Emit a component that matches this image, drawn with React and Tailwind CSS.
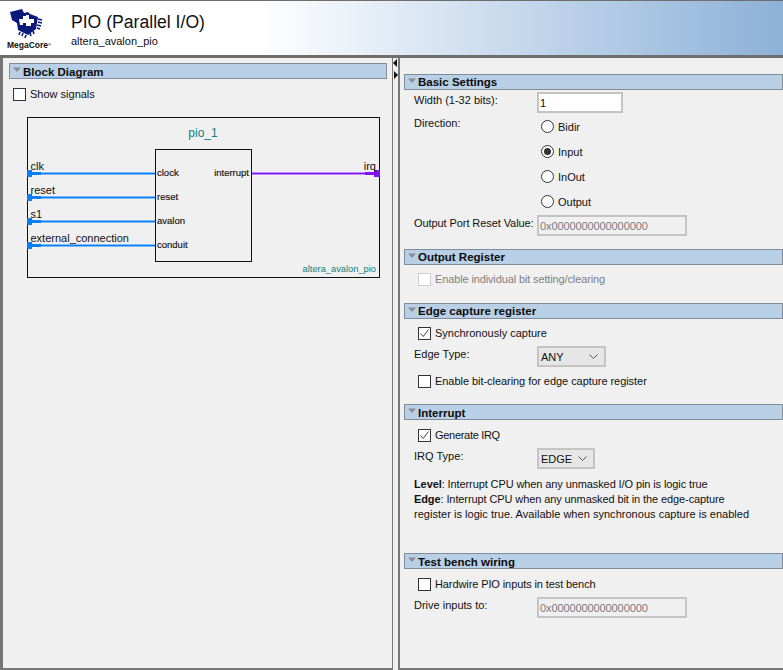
import React from 'react';

const SectionTitle = ({ title, low }) => (
  <div className="flex h-[16px] items-center border border-[#808c99] bg-[#b8cfe5] pl-[2px]">
    <svg width="10" height="6" viewBox="0 0 10 6" className="mb-[3px] shrink-0">
      <path d="M1 0.5h8L5 5z" fill="#8a8f96" />
    </svg>
    <span className={`ml-[1px] text-[11.5px] font-bold leading-[14px] text-[#0c0c0c] ${low ? 'pt-[1px]' : ''}`}>{title}</span>
  </div>
);

const CheckBox = ({ label, checked, disabled, tight }) => (
  <div className="flex h-[14px] items-center pl-[14px]">
    <span className={`flex h-[13px] w-[13px] items-center justify-center border bg-white ${disabled ? 'border-[#cfcfcf]' : 'border-[#333]'}`}>
      {checked && (
        <svg width="11" height="11" viewBox="0 0 11 11">
          <path d="M1.5 5.5L4.2 8.5L9.5 1.5" fill="none" stroke="#444" strokeWidth="1" />
        </svg>
      )}
    </span>
    <span className={`ml-[4px] whitespace-nowrap ${disabled ? 'text-[#808080]' : ''} ${tight || ''}`}>{label}</span>
  </div>
);

const Radio = ({ label, checked }) => (
  <div className="flex h-[25px] items-center pl-[4px]">
    <span className="flex h-[13px] w-[13px] items-center justify-center rounded-full border border-[#333] bg-white">
      {checked && <span className="h-[7px] w-[7px] rounded-full bg-[#333]" />}
    </span>
    <span className="ml-[4px]">{label}</span>
  </div>
);

const Field = ({ value, width, disabled }) => (
  <div className={`flex h-[21px] items-center border-2 border-[#c4c4c4] pl-[1px] ${width} ${disabled ? 'bg-[#f0f0f0] tracking-[-0.1px] text-[#7a7a7a]' : 'bg-white'}`}>
    {value}
  </div>
);

const Dropdown = ({ value, width }) => (
  <div className={`flex h-[21px] items-center justify-between border-2 border-[#c4c4c4] bg-[#e6e6e6] pl-[2px] pr-[6px] ${width}`}>
    {value}
    <svg width="9" height="5" viewBox="0 0 9 5">
      <path d="M0.5 0.5L4.5 4.5L8.5 0.5" fill="none" stroke="#555" />
    </svg>
  </div>
);

const Logo = () => (
  <div className="flex w-[46px] flex-col items-start">
    <svg width="34" height="30" viewBox="0 0 34 30" className="ml-[2px]">
      <path d="M1 4L13 1L15 5L19 4L21 6L29 9L27 21L19 27L9 22L8 15L3 12Z" fill="#0a1a7c" />
      <path d="M10 11h4V8h3v-1h3v4h5v4h-3v3h-5v-3h-3v2h-3z" fill="#fff" />
      <path d="M29 11l4 1M29 14l4 1M28 17l4 1M28 20l3 1M11 24l-1 3M14 25l-1 3M17 27l-1 3M21 25l1 3M24 23l1 3" stroke="#0a1a7c" strokeWidth="1.6" />
    </svg>
    <span className="mt-[2px] whitespace-nowrap text-[8.5px] font-black leading-[10px] text-[#111]">
      MegaCore<sup className="text-[4px]">®</sup>
    </span>
  </div>
);

const inPorts = [
  { y: 56, name: 'clk', port: 'clock' },
  { y: 80, name: 'reset', port: 'reset' },
  { y: 104, name: 's1', port: 'avalon' },
  { y: 128, name: 'external_connection', port: 'conduit' },
];

const BlockDiagram = () => (
  <svg width="354" height="161" viewBox="0 0 354 161" className="block" fontFamily="'Liberation Sans', Arial, sans-serif">
    <rect x="0.5" y="0.5" width="352" height="160" fill="#f0f0f0" stroke="#111" />
    <text x="176" y="20" textAnchor="middle" fontSize="12" fill="#0e8080">pio_1</text>
    {inPorts.map((p) => (
      <g key={p.name}>
        <rect x="3" y={p.y - 1} width="125" height="3" fill="#7cbcf9" />
        <rect x="3" y={p.y} width="125" height="1" fill="#0b7df5" />
        <rect x="3" y={p.y - 1} width="11" height="3" fill="#0b7df5" />
        <rect x="0" y={p.y - 3} width="5" height="7" fill="#0b7df5" />
        <text x="3.5" y={p.y - 3} fontSize="11" fill="#111">{p.name}</text>
        <text x="130" y={p.y + 3} fontSize="9.5" stroke="#111" strokeWidth="0.15" fill="#111">{p.port}</text>
      </g>
    ))}
    <rect x="225" y="55" width="125" height="3" fill="#c08cfa" />
    <rect x="225" y="56" width="125" height="1" fill="#7f12f5" />
    <rect x="338" y="55" width="11" height="3" fill="#7f12f5" />
    <rect x="347" y="53" width="6" height="7" fill="#7f12f5" />
    <text x="349" y="53" textAnchor="end" fontSize="11" fill="#111">irq</text>
    <rect x="128.5" y="32.5" width="96" height="112" fill="none" stroke="#111" />
    <text x="222" y="59" textAnchor="end" fontSize="9.5" stroke="#111" strokeWidth="0.15" fill="#111">interrupt</text>
    <text x="349" y="155" textAnchor="end" fontSize="9.3" fill="#0e8080">altera_avalon_pio</text>
  </svg>
);

export default function App() {
  return (
    <div className="flex h-[670px] w-[783px] flex-col overflow-hidden bg-[#f0f0f0] font-['Liberation_Sans',Arial,sans-serif] text-[11px] leading-[14px] text-[#111]">
      {/* header */}
      <div className="flex h-[58px] shrink-0 items-start border-b-[3px] border-t border-[#6e6e6e] bg-gradient-to-r from-white from-[33%] to-[#8db1d8] pl-[7px] pt-[7px]">
        <Logo />
        <div className="ml-[18px] mt-[3px]">
          <div className="text-[17.6px] leading-[22px] text-[#111]">PIO (Parallel I/O)</div>
          <div className="mt-[1px] leading-[14px]">altera_avalon_pio</div>
        </div>
      </div>

      <div className="flex min-h-0 flex-1">
        {/* left panel */}
        <div className="h-full w-[393px] shrink-0 border-b-2 border-l-[3px] border-r border-[#777] pl-[6px] pr-[5px] pt-[5px]">
          <SectionTitle title="Block Diagram" low />
          <div className="mt-[8px]">
            <div className="-ml-[10px]">
              <CheckBox label="Show signals" />
            </div>
          </div>
          <div className="ml-[18px] mt-[16px]">
            <BlockDiagram />
          </div>
        </div>

        {/* splitter */}
        <div className="flex w-[5px] shrink-0 flex-col items-center pt-[1px]">
          <svg width="5" height="8" viewBox="0 0 5 8"><path d="M4 0v8L0 4z" fill="#111" /></svg>
          <svg width="5" height="8" viewBox="0 0 5 8" className="mt-[4px]"><path d="M1 0v8l4-4z" fill="#111" /></svg>
        </div>

        {/* right panel */}
        <div className="h-full min-w-0 flex-1 border-b-2 border-l-2 border-[#777] pl-[4px] pt-[16px]">
          <section className="h-[175px]">
            <SectionTitle title="Basic Settings" />
            <div className="pl-[10px]">
              <div className="mt-[2px] flex h-[20px]">
                <div className="w-[123px] pt-[1px]">Width (1-32 bits):</div>
                <Field value="1" width="w-[86px]" />
              </div>
              <div className="flex h-[103px]">
                <div className="w-[123px] pt-[4px]">Direction:</div>
                <div className="pt-[2px]">
                  <Radio label="Bidir" />
                  <Radio label="Input" checked />
                  <Radio label="InOut" />
                  <Radio label="Output" />
                </div>
              </div>
              <div className="flex h-[21px]">
                <div className="w-[123px] whitespace-nowrap pt-[1px] tracking-[-0.08px]">Output Port Reset Value:</div>
                <Field value="0x0000000000000000" width="w-[150px]" disabled />
              </div>
            </div>
          </section>

          <section className="h-[54px]">
            <SectionTitle title="Output Register" />
            <div className="pt-[7px]">
              <CheckBox label="Enable individual bit setting/clearing" disabled tight="tracking-[-0.13px]" />
            </div>
          </section>

          <section className="h-[101px]">
            <SectionTitle title="Edge capture register" />
            <div className="pt-[7px]">
              <CheckBox label="Synchronously capture" checked />
              <div className="mt-[6px] flex pl-[10px]">
                <div className="w-[123px] pt-[1px]">Edge Type:</div>
                <Dropdown value="ANY" width="w-[69px]" />
              </div>
              <div className="mt-[7px]">
                <CheckBox label="Enable bit-clearing for edge capture register" tight="tracking-[-0.05px]" />
              </div>
            </div>
          </section>

          <section className="h-[149px]">
            <SectionTitle title="Interrupt" low />
            <div className="pt-[8px]">
              <CheckBox label="Generate IRQ" checked tight="tracking-[-0.3px]" />
              <div className="mt-[6px] flex pl-[10px]">
                <div className="w-[123px] pt-[1px]">IRQ Type:</div>
                <Dropdown value="EDGE" width="w-[58px]" />
              </div>
              <div className="mt-[8px] pl-[10px] leading-[15px]">
                <div className="tracking-[-0.1px]"><b>Level</b>: Interrupt CPU when any unmasked I/O pin is logic true</div>
                <div className="tracking-[-0.1px]"><b>Edge</b>: Interrupt CPU when any unmasked bit in the edge-capture</div>
                <div className="tracking-[0.03px]">register is logic true. Available when synchronous capture is enabled</div>
              </div>
            </div>
          </section>

          <section>
            <SectionTitle title="Test bench wiring" low />
            <div className="pt-[8px]">
              <CheckBox label="Hardwire PIO inputs in test bench" tight="tracking-[-0.1px]" />
              <div className="mt-[6px] flex pl-[10px]">
                <div className="w-[123px] pt-[1px]">Drive inputs to:</div>
                <Field value="0x0000000000000000" width="w-[150px]" disabled />
              </div>
            </div>
          </section>
        </div>
      </div>
    </div>
  );
}
